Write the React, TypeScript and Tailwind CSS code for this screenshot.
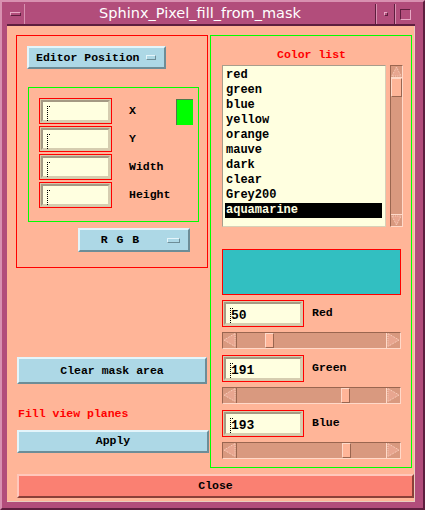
import React from 'react';

const mono = "font-['Liberation_Mono','DejaVu_Sans_Mono',monospace] font-bold text-[11.5px] leading-none";

const Cursor = () => (
  <span className="absolute left-[4px] top-[4px] h-[15px] w-[3px] border-l border-dotted border-black">
    <span className="absolute -left-[1px] top-0 h-[1px] w-[3px] border-t border-dotted border-black" />
  </span>
);

const Field = ({ value = '', w, h = 26 }: { value?: string; w: string; h?: number }) => (
  <div className={`${w} ${h === 27 ? 'h-[27px]' : 'h-[26px]'} border border-[#ff0000] bg-[#d8c8a8] p-[1px]`}>
    <div className="relative h-full w-full border-2 border-t-[#a49a84] border-l-[#a49a84] border-b-[#d6cdb0] border-r-[#d6cdb0] bg-[#ffffe0]">
      <Cursor />
      <span className={`${mono} absolute left-[5px] top-[5px] text-[13px] text-black`}>{value}</span>
    </div>
  </div>
);

const Arrow = ({ dir }: { dir: 'left' | 'right' }) => {
  const pts = dir === 'left' ? '13,1 1,8 13,15' : '1,1 13,8 1,15';
  return (
    <svg width="14" height="16" viewBox="0 0 14 16">
      <polygon points={pts} fill="#e8a690" stroke="#ffd9c9" strokeWidth="1" strokeDasharray="1 1" />
    </svg>
  );
};

const Slider = ({ pos }: { pos: number }) => (
  <div className="relative flex h-[17px] w-[179px] items-center border-t border-l border-[#9a6650] border-b border-r border-b-[#ffd9c9] border-r-[#ffd9c9] bg-[#d9997f]">
    <div className="flex h-full w-[14px] items-center border-r border-[#9a6650]">
      <Arrow dir="left" />
    </div>
    <div className="flex-1" />
    <div className="flex h-full w-[14px] items-center border-l border-[#ffd9c9]">
      <Arrow dir="right" />
    </div>
    <div
      className="absolute top-0 h-[15px] w-[9px] border border-t-[#ffd9c9] border-l-[#ffd9c9] border-b-[#9a6650] border-r-[#9a6650] bg-[#ffb598]"
      style={{ left: pos }}
    />
  </div>
);

const BlueButton = ({
  label,
  w,
  h,
  menu = false,
  center = false,
  spaced = false
}: {
  label: string;
  w: string;
  h: string;
  menu?: boolean;
  center?: boolean;
  spaced?: boolean;
}) => (
  <div className={`${w} ${h} flex items-center border-2 border-t-[#e4f5fb] border-l-[#e4f5fb] border-b-[#6d8d97] border-r-[#6d8d97] bg-[#add8e6] ${mono} text-black`}>
    <span className={`${center ? 'flex-1 text-center' : 'pl-[7px]'} ${spaced ? 'tracking-[1px]' : ''} whitespace-nowrap`}>{label}</span>
    {menu && (
      <span className="mr-[8px] ml-[6px] h-[5px] w-[13px] border border-t-[#e4f5fb] border-l-[#e4f5fb] border-b-[#6d8d97] border-r-[#6d8d97]" />
    )}
  </div>
);

const colors = ['red', 'green', 'blue', 'yellow', 'orange', 'mauve', 'dark', 'clear', 'Grey200', 'aquamarine'];

export default function App() {
  return (
    <div className="flex h-[510px] w-[425px] flex-col border-2 border-t-[#d890b0] border-l-[#d890b0] border-b-[#5e1e3e] border-r-[#5e1e3e] bg-[#b24d7b] pb-[6px] pl-[5px] pr-[8px] pt-[2px]">
      {/* title bar */}
      <div className="flex h-[22px] border-b-2 border-[#5e1e3e]">
        <div className="flex w-[18px] items-center justify-center border-r border-[#d890b0]">
          <span className="h-[4px] w-[11px] border border-t-[#e8a8c4] border-l-[#e8a8c4] border-b-[#5e1e3e] border-r-[#5e1e3e]" />
        </div>
        <div className="flex flex-1 items-center justify-center border-r border-[#5e1e3e] font-['DejaVu_Sans',sans-serif] text-[14.5px] text-white">
          Sphinx_Pixel_fill_from_mask
        </div>
        <div className="flex w-[19px] items-center justify-center border-l border-r border-l-[#d890b0] border-r-[#5e1e3e]">
          <span className="h-[4px] w-[4px] border border-t-[#e8a8c4] border-l-[#e8a8c4] border-b-[#5e1e3e] border-r-[#5e1e3e]" />
        </div>
        <div className="flex w-[20px] items-center justify-center border-l border-[#d890b0]">
          <span className="h-[11px] w-[11px] border border-t-[#5e1e3e] border-l-[#5e1e3e] border-b-[#e8a8c4] border-r-[#e8a8c4]" />
        </div>
      </div>

      {/* content */}
      <div className="flex h-[476px] w-[408px] flex-col border-b border-r border-[#e8cdc0] bg-[#ffb598] pl-[9px] pt-[9px]">
        <div className="flex gap-[2px]">
          {/* left column */}
          <div className="flex w-[192px] flex-col">
            <div className="flex h-[233px] w-[192px] flex-col border border-[#ff0000] pl-[10px] pt-[10px]">
              <BlueButton label="Editor Position" w="w-[139px]" h="h-[23px]" menu />
              <div className="ml-[1px] mt-[18px] flex h-[135px] w-[171px] border border-[#00ff00] pl-[10px] pt-[10px]">
                <div className="flex flex-col gap-[2px]">
                  {['X', 'Y', 'Width', 'Height'].map(l => (
                    <div key={l} className="flex items-center">
                      <Field w="w-[73px]" />
                      <span className={`${mono} ml-[17px] w-[47px] text-black`}>{l}</span>
                    </div>
                  ))}
                </div>
                <div className="mt-[1px] h-[26px] w-[17px] border-l border-t border-[#4c7a4c] bg-[#00ff00]" />
              </div>
              <div className="ml-[51px] mt-[6px]">
                <BlueButton label="R G B" w="w-[112px]" h="h-[24px]" menu center spaced />
              </div>
            </div>
            <div className="ml-[1px] mt-[89px]">
              <BlueButton label="Clear mask area" w="w-[190px]" h="h-[27px]" center />
            </div>
            <div className={`${mono} ml-[2px] mt-[24px] text-[#ff0000]`}>Fill view planes</div>
            <div className="ml-[1px] mt-[10px]">
              <BlueButton label="Apply" w="w-[192px]" h="h-[23px]" center />
            </div>
          </div>

          {/* right column */}
          <div className="flex h-[433px] w-[202px] flex-col border border-[#00ff00] pl-[11px]">
            <div className={`${mono} mt-[13px] w-[179px] text-center text-[#ff0000]`}>Color list</div>
            <div className="mt-[4px] flex">
              <div className="h-[162px] w-[164px] border border-t-[#a89e8c] border-l-[#a89e8c] border-b-[#d8d0b8] border-r-[#d8d0b8] bg-[#ffffe0] pl-[2px] pt-[2px]">
                {colors.map(c => (
                  <div
                    key={c}
                    className={`${mono} flex h-[15px] w-[157px] items-center pl-[1px] text-[12px] ${c === 'aquamarine' ? 'bg-black text-[#ffffe0]' : 'text-black'}`}
                  >
                    {c}
                  </div>
                ))}
              </div>
              <div className="ml-[4px] flex h-[162px] w-[13px] flex-col border border-t-[#9a6650] border-l-[#9a6650] border-b-[#ffd9c9] border-r-[#ffd9c9] bg-[#d9997f]">
                <div className="h-[12px] border-b border-[#ffd9c9]">
                  <svg width="11" height="11" viewBox="0 0 12 12">
                    <polygon points="1,11 6,1 11,11" fill="#e8a690" stroke="#ffd9c9" strokeDasharray="1 1" />
                  </svg>
                </div>
                <div className="h-[19px] border border-t-[#ffd9c9] border-l-[#ffd9c9] border-b-[#9a6650] border-r-[#9a6650] bg-[#ffb598]" />
                <div className="flex-1" />
                <div className="h-[12px] border-t border-[#ffd9c9]">
                  <svg width="11" height="11" viewBox="0 0 12 12">
                    <polygon points="1,1 6,11 11,1" fill="#e8a690" stroke="#ffd9c9" strokeDasharray="1 1" />
                  </svg>
                </div>
              </div>
            </div>
            <div className="mt-[22px] h-[46px] w-[179px] border border-[#ff0000] bg-[#32bfc1]" />
            {[
              { l: 'Red', v: '50', p: 42, mt: 'mt-[5px]' },
              { l: 'Green', v: '191', p: 118, mt: 'mt-[6px]' },
              { l: 'Blue', v: '193', p: 119, mt: 'mt-[6px]' }
            ].map(r => (
              <div key={r.l} className={`${r.mt} flex flex-col`}>
                <div className="flex items-center">
                  <Field value={r.v} w="w-[82px]" h={27} />
                  <span className={`${mono} ml-[8px] text-black`}>{r.l}</span>
                </div>
                <div className="mt-[5px]">
                  <Slider pos={r.p} />
                </div>
              </div>
            ))}
          </div>
        </div>

        {/* close */}
        <div className="ml-[1px] mt-[6px] flex h-[24px] w-[397px] items-center justify-center border-2 border-t-[#ffc8bc] border-l-[#ffc8bc] border-b-[#8a4038] border-r-[#8a4038] bg-[#fa8072]">
          <span className={`${mono} text-black`}>Close</span>
        </div>
      </div>
    </div>
  );
}
